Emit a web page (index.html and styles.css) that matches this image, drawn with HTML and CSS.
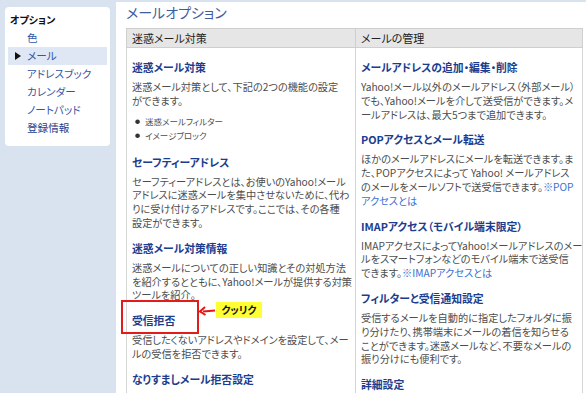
FILE: index.html
```html
<!DOCTYPE html>
<html lang="ja">
<head>
    <meta charset="UTF-8">
    <title>メールオプション</title>
    <link rel="stylesheet" href="styles.css">
</head>
<body>
    <div class="page">
        <!-- Left options menu -->
        <aside class="side">
            <div class="side-title">オプション</div>
            <ul class="side-menu">
                <li><a href="#">色</a></li>
                <li class="current"><a href="#">メール</a></li>
                <li><a href="#">アドレスブック</a></li>
                <li><a href="#">カレンダー</a></li>
                <li><a href="#">ノートパッド</a></li>
                <li><a href="#" class="strong">登録情報</a></li>
            </ul>
        </aside>

        <main class="main">
            <h1 class="page-title">メールオプション</h1>

            <table class="opt-table">
                <thead>
                    <tr>
                        <th class="col-left">迷惑メール対策</th>
                        <th>メールの管理</th>
                    </tr>
                </thead>
                <tbody>
                    <tr>
                        <td class="col-left">
                            <div class="section">
                                <h3><a href="#">迷惑メール対策</a></h3>
                                <p>迷惑メール対策として、下記の2つの機能の設定<br>ができます。</p>
                                <ul class="bullets">
                                    <li>迷惑メールフィルター</li>
                                    <li>イメージブロック</li>
                                </ul>
                            </div>
                            <div class="section">
                                <h3><a href="#">セーフティーアドレス</a></h3>
                                <p>セーフティーアドレスとは、お使いのYahoo!メール<br>アドレスに迷惑メールを集中させないために、代わ<br>りに受け付けるアドレスです。ここでは、その各種<br>設定ができます。</p>
                            </div>
                            <div class="section">
                                <h3><a href="#">迷惑メール対策情報</a></h3>
                                <p>迷惑メールについての正しい知識とその対処方法<br>を紹介するとともに、Yahoo!メールが提供する対策<br>ツールを紹介。</p>
                            </div>
                            <div class="section">
                                <h3 class="marked">
                                    <a href="#">受信拒否</a>
                                    <span class="mark-box"></span>
                                    <svg class="mark-arrow" width="17" height="10" viewBox="0 0 17 10">
                                        <path d="M16 4.5 L4 5.5" stroke="#e01818" stroke-width="2" fill="none"/>
                                        <path d="M6 1 L1 5.5 L6.5 9" stroke="#e01818" stroke-width="2" fill="none"/>
                                    </svg>
                                    <span class="mark-label">クッリク</span>
                                </h3>
                                <p>受信したくないアドレスやドメインを設定して、メー<br>ルの受信を拒否できます。</p>
                            </div>
                            <div class="section">
                                <h3><a href="#">なりすましメール拒否設定</a></h3>
                            </div>
                        </td>
                        <td>
                            <div class="section">
                                <h3><a href="#">メールアドレスの追加・編集・削除</a></h3>
                                <p>Yahoo!メール以外のメールアドレス（外部メール）<br>でも、Yahoo!メールを介して送受信ができます。メ<br>ールアドレスは、最大5つまで追加できます。</p>
                            </div>
                            <div class="section">
                                <h3><a href="#">POPアクセスとメール転送</a></h3>
                                <p>ほかのメールアドレスにメールを転送できます。ま<br>た、POPアクセスによって Yahoo! メールアドレス<br>のメールをメールソフトで送受信できます。<a href="#" class="more">※POP<br>アクセスとは</a></p>
                            </div>
                            <div class="section">
                                <h3><a href="#">IMAPアクセス（モバイル端末限定）</a></h3>
                                <p>IMAPアクセスによってYahoo!メールアドレスのメー<br>ルをスマートフォンなどのモバイル端末で送受信<br>できます。<a href="#" class="more">※IMAPアクセスとは</a></p>
                            </div>
                            <div class="section">
                                <h3><a href="#">フィルターと受信通知設定</a></h3>
                                <p>受信するメールを自動的に指定したフォルダに振<br>り分けたり、携帯端末にメールの着信を知らせる<br>ことができます。迷惑メールなど、不要なメールの<br>振り分けにも便利です。</p>
                            </div>
                            <div class="section">
                                <h3><a href="#">詳細設定</a></h3>
                            </div>
                        </td>
                    </tr>
                </tbody>
            </table>
        </main>
    </div>
</body>
</html>
```

FILE: styles.css
```css
body {
    margin: 0;
    background-color: #d9e2ef;
    font-family: "Noto Sans CJK JP", "Noto Sans", sans-serif;
    font-feature-settings: "palt";
    color: #4d4d4d;
}

a {
    text-decoration: none;
}

.page {
    display: flex;
    align-items: flex-start;
    padding-top: 2px;
    min-height: 391px;
}

/* Left menu */
.side {
    flex: none;
    width: 105px;
    height: 139px;
    margin: 5px 0 0 5px;
    background: white;
    border-radius: 4px;
    box-sizing: border-box;
    padding-top: 5px;
}

.side-title {
    font-size: 10px;
    font-weight: bold;
    color: #111;
    line-height: 16px;
    padding-left: 5px;
}

.side-menu {
    list-style: none;
    margin: 1px 0 0 0;
    padding: 0;
}

.side-menu li {
    position: relative;
    height: 18px;
    line-height: 18px;
    margin: 0 3px;
    padding-left: 19px;
    font-size: 10.6px;
}

.side-menu li a {
    color: #3556a3;
}

.side-menu li a.strong {
    color: #1f3f8f;
}

.side-menu li.current {
    background-color: #dfe7f5;
}

.side-menu li.current::before {
    content: "";
    position: absolute;
    left: 7px;
    top: 5px;
    border-left: 6px solid #111;
    border-top: 4px solid transparent;
    border-bottom: 4px solid transparent;
}

/* Main area */
.main {
    flex: 1;
    align-self: stretch;
    background: white;
    margin-left: 6px;
    padding-left: 10px;
    overflow: hidden;
}

.page-title {
    margin: 0 0 6px 0;
    font-size: 14px;
    line-height: 20px;
    font-weight: normal;
    color: #3e5d9e;
}

.opt-table {
    width: 457px;
    table-layout: fixed;
    border-collapse: collapse;
    border: 1px solid #cfcfcf;
}

.opt-table th {
    background-color: #e6e6e6;
    height: 18px;
    padding: 0 5px;
    text-align: left;
    font-size: 11px;
    font-weight: normal;
    color: #222;
    border: 1px solid #cfcfcf;
}

.opt-table th.col-left {
    width: 218px;
}

.opt-table td {
    vertical-align: top;
    padding: 11px 5px 0 5px;
    border: 1px solid #d6d6d6;
}

.section {
    margin-bottom: 10px;
}

.section h3 {
    margin: 0 0 5px 0;
    font-size: 10.8px;
    line-height: 16px;
    font-weight: bold;
}

.section h3 a {
    color: #1c3d8e;
}

.section p {
    margin: 0;
    font-size: 10.2px;
    line-height: 13.8px;
    white-space: nowrap;
}

.section a.more {
    color: #3a6fd0;
}

.bullets {
    margin: 6px 0 12px 3px;
    padding: 0;
    list-style: none;
    font-size: 8.5px;
    line-height: 13px;
}

.bullets li::before {
    content: "●";
    font-size: 5px;
    margin-right: 5px;
    vertical-align: 2px;
    color: #333;
}

/* Highlight around 受信拒否 */
.marked {
    position: relative;
}

.mark-box {
    position: absolute;
    left: -11px;
    top: -12px;
    width: 74px;
    height: 30px;
    border: 2px solid #e41b1b;
}

.mark-arrow {
    position: absolute;
    left: 67px;
    top: -6px;
}

.mark-label {
    position: absolute;
    left: 84px;
    top: -10px;
    width: 46px;
    height: 16px;
    background-color: #ffff33;
    color: #111;
    font-size: 10px;
    font-weight: bold;
    line-height: 16px;
    text-align: center;
}
```
